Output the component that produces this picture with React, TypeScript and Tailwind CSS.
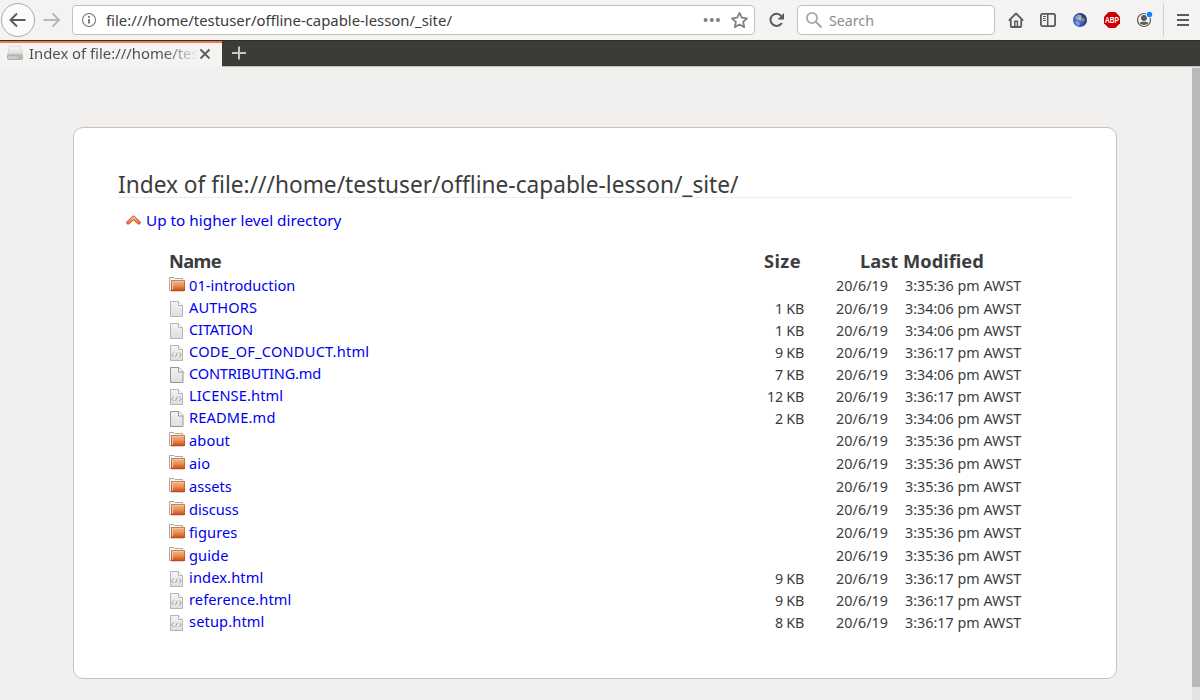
type Kind = "folder" | "plain" | "html" | "md";
type Entry = { name: string; kind: Kind; size?: string; time: string; tracking: string };

const entries: Entry[] = [
  { name: "01-introduction", kind: "folder", time: "3:35:36", tracking: "tracking-[0.03px]" },
  { name: "AUTHORS", kind: "plain", size: "1 KB", time: "3:34:06", tracking: "tracking-[0.08px]" },
  { name: "CITATION", kind: "plain", size: "1 KB", time: "3:34:06", tracking: "tracking-[-0.14px]" },
  { name: "CODE_OF_CONDUCT.html", kind: "html", size: "9 KB", time: "3:36:17", tracking: "tracking-[0.22px]" },
  { name: "CONTRIBUTING.md", kind: "md", size: "7 KB", time: "3:34:06", tracking: "tracking-[-0.2px]" },
  { name: "LICENSE.html", kind: "html", size: "12 KB", time: "3:36:17", tracking: "tracking-[0.12px]" },
  { name: "README.md", kind: "md", size: "2 KB", time: "3:34:06", tracking: "tracking-[0.17px]" },
  { name: "about", kind: "folder", time: "3:35:36", tracking: "tracking-[0.14px]" },
  { name: "aio", kind: "folder", time: "3:35:36", tracking: "tracking-[0.1px]" },
  { name: "assets", kind: "folder", time: "3:35:36", tracking: "tracking-normal" },
  { name: "discuss", kind: "folder", time: "3:35:36", tracking: "tracking-normal" },
  { name: "figures", kind: "folder", time: "3:35:36", tracking: "tracking-[0.1px]" },
  { name: "guide", kind: "folder", time: "3:35:36", tracking: "tracking-[0.1px]" },
  { name: "index.html", kind: "html", size: "9 KB", time: "3:36:17", tracking: "tracking-[0.14px]" },
  { name: "reference.html", kind: "html", size: "9 KB", time: "3:36:17", tracking: "tracking-[0.1px]" },
  { name: "setup.html", kind: "html", size: "8 KB", time: "3:36:17", tracking: "tracking-[0.14px]" },
];

function FolderIcon() {
  return (
    <svg width="16" height="16" viewBox="0 0 16 16" className="block">
      <path d="M.5 13.500V.5h4.500l1 1h7.500v2" fill="#f7f7f6" stroke="#a9a8a5" />
      <path d="M.5 13.500h2" stroke="#a9a8a5" />
      <rect x="2.500" y="3.500" width="13" height="10" fill="url(#folderFill)" stroke="url(#folderEdge)" />
      <path d="M3.500 12.500v-8h11" fill="none" stroke="#f3c49b" />
      <path d="M2 14.500h13" stroke="#bbb" strokeOpacity=".6" />
    </svg>
  );
}

function FileIcon({ kind }: { kind: Kind }) {
  const md = kind === "md";
  const stroke = md ? "#959595" : "#b5b5b5";
  const d = md ? "M1.5.5h8.500l4 4v11h-12.500z" : "M1.5.5h8l4 4v11h-12z";
  const fold = md ? "M9.5.5v4.500h4.500" : "M9.5.5v4h4";
  return (
    <svg width="16" height="16" viewBox="0 0 16 16" className="block">
      <path d={d} fill="url(#pageFill)" stroke={stroke} />
      <path d={fold} fill="#fff" stroke={stroke} />
      {kind === "html" && (
        <path d="M4.600 7.500 2.600 9.800l2 2.200M10.200 7.500l2 2.300-2 2.200M8.300 7.800l-1.800 4" fill="none" stroke="#999" strokeWidth=".9" />
      )}
    </svg>
  );
}

function Row({ e }: { e: Entry }) {
  const folder = e.kind === "folder";
  return (
    <div className={`flex whitespace-nowrap ${folder ? "h-[23px]" : "h-[22px]"}`}>
      <div className="flex w-[560px] items-start">
        <span className={`w-5 shrink-0 ${folder ? "pt-[2px]" : "pt-[3px]"}`}>
          {folder ? <FolderIcon /> : <FileIcon kind={e.kind} />}
        </span>
        <a className={`text-[14.6px] text-[#0000ee] ${folder ? "leading-[20px]" : "leading-[18px]"} ${e.tracking}`}>{e.name}</a>
      </div>
      <div className="w-[75px] text-right text-[14.3px] leading-[22px] tracking-[-0.25px]">{e.size}</div>
      <div className="ml-8 w-[69px] text-[14.3px] leading-[22px] tracking-[0.07px]">20/6/19</div>
      <div className="text-[14.3px] leading-[22px] tracking-[0.03px]">{e.time} pm AWST</div>
    </div>
  );
}

function NavBar() {
  return (
    <div className="flex h-10 shrink-0 items-center bg-[#f4f3f2]">
      <svg width="72" height="40" viewBox="0 0 72 40" fill="none" className="shrink-0">
        <circle cx="18" cy="20" r="16.500" fill="#fbfbfb" stroke="#aaa9a7" />
        <path d="M25.500 20H11M17 13.500 10.500 20l6.500 6.500" stroke="#5b5b5a" strokeWidth="2" />
        <path d="M43.500 20H58M52.500 13.500 59 20l-6.500 6.500" stroke="#bab9b7" strokeWidth="2" />
      </svg>
      <div className="flex h-[30px] w-[683px] items-center rounded-[4px] border border-[#c3c1be] bg-white">
        <svg width="16" height="16" viewBox="0 0 16 16" fill="none" className="ml-[8px]">
          <circle cx="8" cy="8" r="6.500" stroke="#777" strokeWidth="1.100" />
          <path d="M8 7v4.500M8 4v1.700" stroke="#666" strokeWidth="1.700" />
        </svg>
        <span className="ml-[9px] flex-1 whitespace-nowrap text-[14.88px] leading-5">file:///home/testuser/offline-capable-lesson/_site/</span>
        <svg width="52" height="20" viewBox="0 0 52 20" fill="none" className="mr-[2px]">
          <g fill="#808080">
            <circle cx="5.600" cy="10" r="2" />
            <circle cx="11.800" cy="10" r="2" />
            <circle cx="18" cy="10" r="2" />
          </g>
          <path d="m39.500 2.900 2.300 4.800 5.200.6-3.900 3.600 1.100 5.200-4.700-2.600-4.700 2.600 1.100-5.200L32 8.300l5.200-.6z" stroke="#808080" strokeWidth="1.800" strokeLinejoin="round" />
        </svg>
      </div>
      <svg width="42" height="40" viewBox="0 0 42 40" fill="none" className="shrink-0">
        <path d="M26.200 15.800A6.100 6.100 0 1 0 26.800 23" stroke="#5b5b5a" strokeWidth="2" />
        <path d="M29 13v6.500h-6.500z" fill="#5b5b5a" />
      </svg>
      <div className="flex h-[30px] w-[198px] items-center rounded-[4px] border border-[#c3c1be] bg-white">
        <svg width="18" height="18" viewBox="0 0 18 18" fill="none" className="ml-[7px]">
          <circle cx="7" cy="7" r="5.100" stroke="#a7a7a7" strokeWidth="1.800" />
          <path d="m10.800 10.800 5.700 5.700" stroke="#a7a7a7" strokeWidth="2" />
        </svg>
        <span className="ml-[6px] pt-px text-[14.2px] leading-5 text-[#8c8c8c]">Search</span>
      </div>
      <svg width="205" height="40" viewBox="0 0 205 40" fill="none" className="shrink-0">
        <g transform="translate(13 12)" stroke="#5b5b5a" strokeWidth="1.800">
          <path d="M.8 8.700 8 1.500l7.200 7.200" strokeLinejoin="round" />
          <path d="M2.800 7.500V14q0 1 1 1h8.400q1 0 1-1V7.500" />
          <path d="M6.800 15V9.300h2.600V15" strokeWidth="1.500" />
        </g>
        <g transform="translate(45 12)" stroke="#5b5b5a">
          <rect x=".9" y="1.900" width="14.200" height="12.200" rx="1.800" strokeWidth="1.800" />
          <path d="M7.700 2v12" strokeWidth="1.500" />
          <path d="M3 4.500h3M3 6.500h2.500M3 8.500h3" />
        </g>
        <g transform="translate(85 20)">
          <circle r="7" fill="url(#globe)" />
          <path d="M-5-3-2-5.500 1-5l1 2-2 1-1 2-3-.5z" fill="#8fa3c9" />
          <path d="M1-2l3 0 1 2.500-2.500 1.500-2-1.500z" fill="#7f8f70" />
          <path d="M-1-3h2v3h-2z" fill="#d0c47a" />
          <path d="M-5.500 1.500-1 2l1 2.500-2 1.500z" fill="#7d9ff0" />
        </g>
        <path d="M113.700 12h6.600l4.700 4.700v6.600l-4.700 4.700h-6.600l-4.700-4.700v-6.600z" fill="#cb0000" />
        <text x="110" y="23" fill="#fff" fontSize="8.400" fontWeight="700" fontFamily="Liberation Sans, sans-serif" textLength="14" lengthAdjust="spacingAndGlyphs">ABP</text>
        <g>
          <circle cx="149" cy="20" r="6.500" stroke="#5b5b5a" strokeWidth="1.200" />
          <circle cx="149" cy="18" r="3" fill="#5b5b5a" />
          <path d="M144.500 23c1.500-1.800 7.500-1.800 9 0-2 2.600-7 2.600-9 0z" fill="#5b5b5a" />
          <circle cx="154.500" cy="14.500" r="3.500" fill="#f4f3f2" />
          <circle cx="154.500" cy="14.500" r="2.700" fill="#0a84ff" />
        </g>
        <path d="M168.500 3v34" stroke="#d2d0ce" />
        <path d="M182 15h12M182 20h12M182 25h12" stroke="#5b5b5a" strokeWidth="2" />
      </svg>
    </div>
  );
}

function TabBar() {
  return (
    <div className="flex h-[27px] shrink-0 border-t border-b border-t-[#2f2e2b] border-b-[#c3c1be] bg-[#3c3b37]">
      <div className="-mb-px flex w-[222px] items-start border-t-2 border-[#f0794c] bg-[#f4f3f2]">
        <svg width="16" height="16" viewBox="0 0 16 16" className="mt-[3px] ml-[7px] shrink-0">
          <path d="M2.500.5h11l2 8.500H.5z" fill="url(#driveTop)" stroke="#c9c9c9" strokeWidth=".6" />
          <rect x=".5" y="9" width="15" height="4.500" rx="1" fill="#c2c2c2" stroke="#9c9c9c" strokeWidth=".7" />
          <path d="M2 10.500V13M4 10.500V13M6 10.500V13M8 10.500V13" stroke="#d8d8d8" />
          <circle cx="13" cy="11.500" r=".9" fill="#65c63c" />
        </svg>
        <span className="ml-[6px] w-[173px] shrink-0 whitespace-nowrap bg-linear-to-r from-[#4c4c4c] from-78% to-transparent to-98% bg-clip-text text-[14.85px] leading-[21px] text-transparent">
          Index of file:///home/tes
        </span>
        <svg width="14" height="14" viewBox="0 0 14 14" className="mt-[4px] -ml-[4px] shrink-0">
          <path d="m2.500 2.500 9 9m0-9-9 9" stroke="#5b5b5a" strokeWidth="1.800" />
        </svg>
      </div>
      <svg width="34" height="25" viewBox="0 0 34 25">
        <path d="M10 12h14M17 5.500v13" stroke="#c9c7c3" strokeWidth="2" />
      </svg>
    </div>
  );
}

export default function App() {
  return (
    <div className="flex h-[700px] w-[1200px] flex-col overflow-hidden bg-[#f1f0ee] font-['Noto_Sans',sans-serif] text-[#3c3c3c]">
      <svg width="0" height="0" className="absolute">
        <defs>
          <linearGradient id="folderFill" x1="0" y1="0" x2="0" y2="1">
            <stop offset="0" stopColor="#f0bb8c" />
            <stop offset=".5" stopColor="#e59257" />
            <stop offset="1" stopColor="#d24c17" />
          </linearGradient>
          <linearGradient id="folderEdge" x1="0" y1="0" x2="0" y2="1">
            <stop offset="0" stopColor="#cf7d55" />
            <stop offset="1" stopColor="#c8481a" />
          </linearGradient>
          <linearGradient id="pageFill" x1="0" y1="0" x2="0" y2="1">
            <stop offset="0" stopColor="#f4f4f4" />
            <stop offset="1" stopColor="#dedede" />
          </linearGradient>
          <linearGradient id="driveTop" x1="0" y1="0" x2="0" y2="1">
            <stop offset="0" stopColor="#fafafa" />
            <stop offset="1" stopColor="#d4d4d4" />
          </linearGradient>
          <linearGradient id="arrowFill" x1="0" y1="0" x2="0" y2="1">
            <stop offset="0" stopColor="#f3bd94" />
            <stop offset="1" stopColor="#e8783f" />
          </linearGradient>
          <radialGradient id="globe" cx=".35" cy=".6" r=".7">
            <stop offset="0" stopColor="#5d86e8" />
            <stop offset=".6" stopColor="#2f4fae" />
            <stop offset="1" stopColor="#1e2a5c" />
          </radialGradient>
        </defs>
      </svg>
      <NavBar />
      <TabBar />
      <div className="flex min-h-0 flex-1">
        <main className="flex-1 pt-[60px] pl-[73px]">
          <div className="h-[552px] w-[1044px] rounded-[10px] border border-[#c6c2be] bg-white px-11 pt-[43px]">
            <h1 className="h-[27px] border-b border-[#ececec] text-[22.68px] leading-[27px] whitespace-nowrap">
              Index of file:///home/testuser/offline-capable-lesson/_site/
            </h1>
            <div className="flex h-[45px] items-center pl-2 text-[15.3px] text-[#0000ee]">
              <svg width="16" height="16" viewBox="0 0 16 16" fill="none" className="mr-[4px]">
                <path d="M2.200 9.600 7.500 4.600l5.300 5" stroke="#c4552b" strokeWidth="3.800" strokeLinecap="round" strokeLinejoin="round" />
                <path d="M2.200 9.600 7.500 4.600l5.300 5" stroke="url(#arrowFill)" strokeWidth="2.200" strokeLinecap="round" strokeLinejoin="round" />
              </svg>
              <a>Up to higher level directory</a>
            </div>
            <div className="pt-[5px] pl-[51px]">
              <div className="flex h-[27px] text-[18.3px] leading-[26px] font-bold whitespace-nowrap">
                <span className="w-[595px] tracking-[-0.6px]">Name</span>
                <span className="w-24 tracking-[0.37px]">Size</span>
                <span>Last Modified</span>
              </div>
              {entries.map((e) => (
                <Row key={e.name} e={e} />
              ))}
            </div>
          </div>
        </main>
        <div className="w-2 bg-[#e4e4e4] pt-px">
          <div className="h-[619px] bg-[#b9b9b9]" />
        </div>
      </div>
    </div>
  );
}
